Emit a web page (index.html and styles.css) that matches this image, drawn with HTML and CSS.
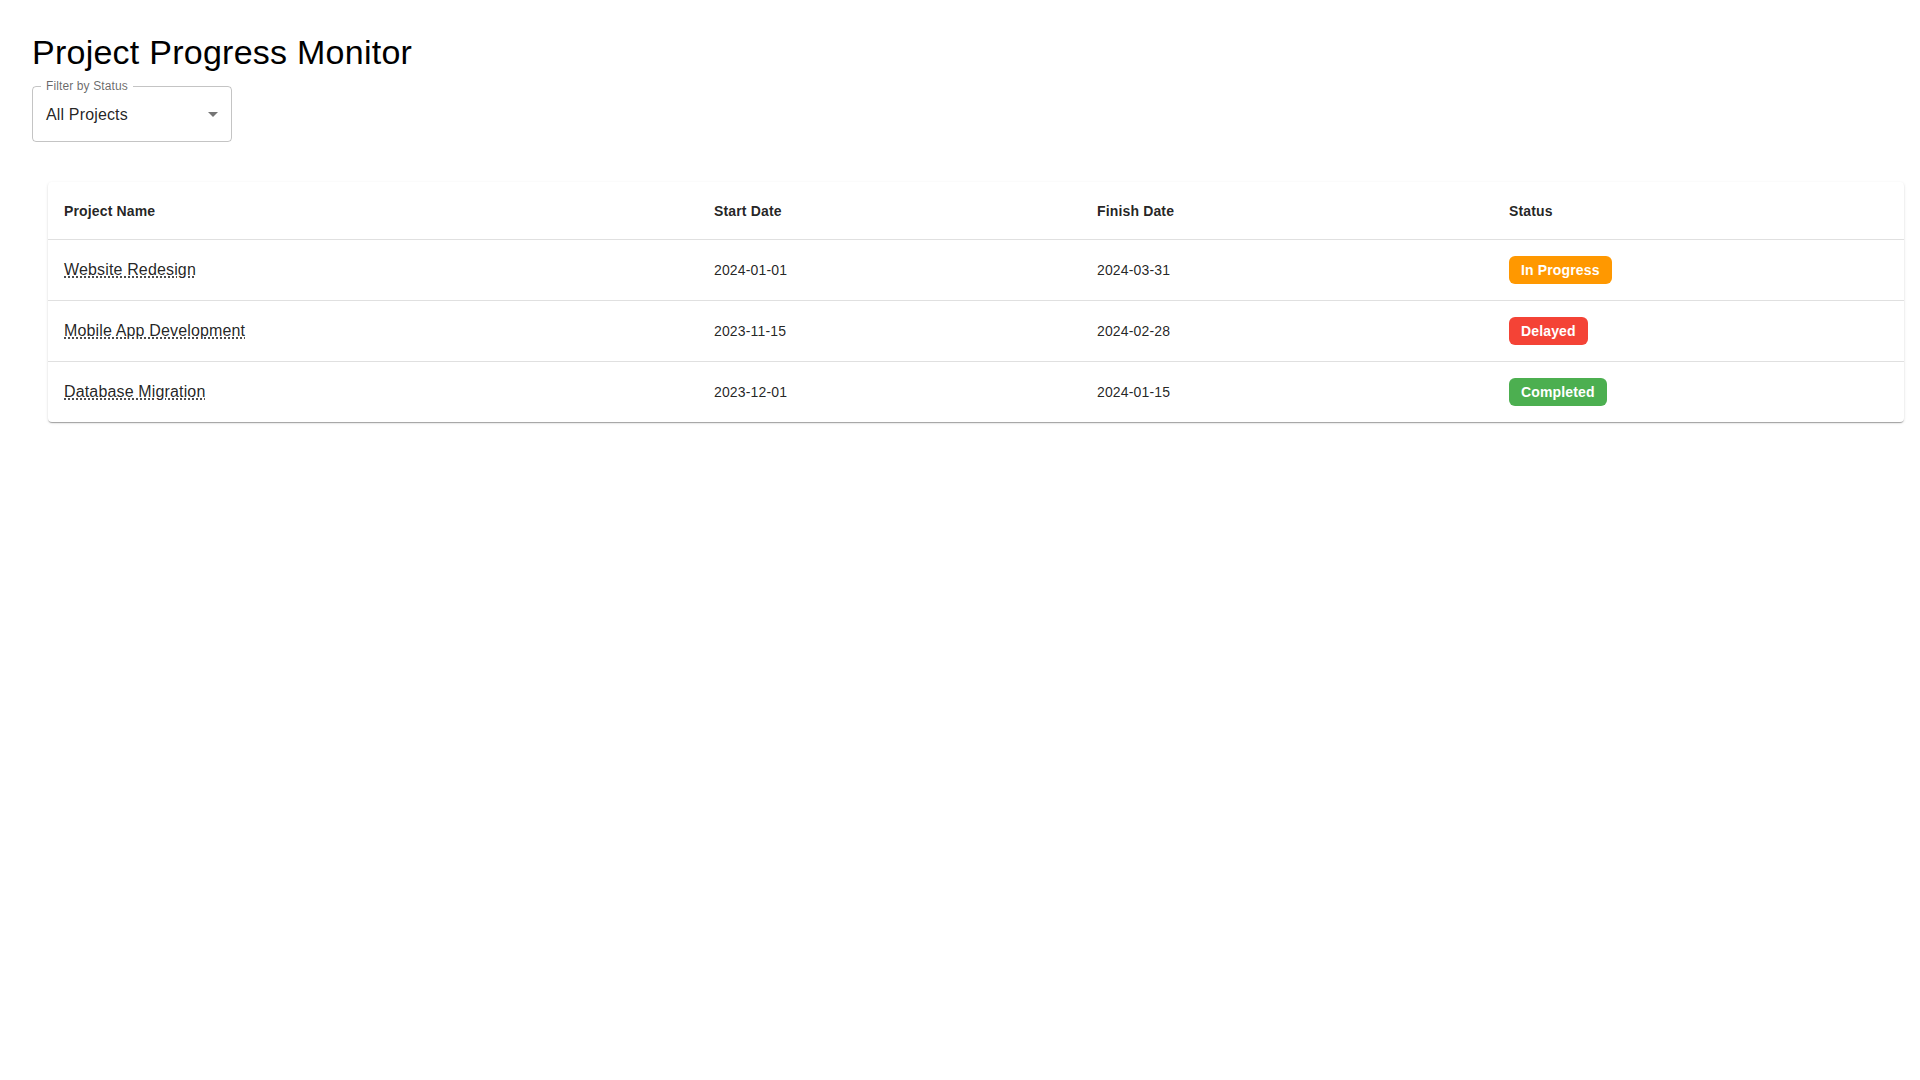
FILE: index.html
```html
<!DOCTYPE html>
<html lang="en">
<head>
<meta charset="utf-8">
<title>Project Progress Monitor</title>
<link rel="stylesheet" href="styles.css">
</head>
<body>
<main class="page">
  <h1 class="title">Project Progress Monitor</h1>
  <div class="select">
    <span class="select-label">Filter by Status</span>
    <span class="select-value">All Projects</span>
    <svg class="select-arrow" viewBox="0 0 24 24" width="24" height="24" aria-hidden="true"><path d="M7 10l5 5 5-5z"/></svg>
  </div>
  <div class="paper">
    <table class="table">
      <thead>
        <tr>
          <th class="col-name">Project Name</th>
          <th class="col-start">Start Date</th>
          <th class="col-finish">Finish Date</th>
          <th class="col-status">Status</th>
        </tr>
      </thead>
      <tbody>
        <tr>
          <td><span class="name">Website Redesign</span></td>
          <td class="date">2024-01-01</td>
          <td class="date">2024-03-31</td>
          <td><span class="chip chip-progress">In Progress</span></td>
        </tr>
        <tr>
          <td><span class="name">Mobile App Development</span></td>
          <td class="date">2023-11-15</td>
          <td class="date">2024-02-28</td>
          <td><span class="chip chip-delayed">Delayed</span></td>
        </tr>
        <tr>
          <td><span class="name">Database Migration</span></td>
          <td class="date">2023-12-01</td>
          <td class="date">2024-01-15</td>
          <td><span class="chip chip-done">Completed</span></td>
        </tr>
      </tbody>
    </table>
  </div>
</main>
</body>
</html>
```

FILE: styles.css
```css
* { box-sizing: border-box; }

html, body {
  margin: 0;
  background: #ffffff;
}

body {
  font-family: "Liberation Sans", Arial, Helvetica, sans-serif;
  color: rgba(0, 0, 0, 0.87);
}

.page {
  padding: 31px 32px 32px;
}

.title {
  margin: 0 0 13px;
  font-size: 34px;
  line-height: 42px;
  font-weight: 400;
  letter-spacing: 0.00735em;
  color: #000;
}

.select {
  position: relative;
  width: 200px;
  height: 56px;
  border: 1px solid rgba(0, 0, 0, 0.23);
  border-radius: 4px;
  display: flex;
  align-items: center;
  padding: 0 6px 0 13px;
}

.select-label {
  position: absolute;
  top: -8px;
  left: 8px;
  padding: 0 5px;
  background: #fff;
  font-size: 12px;
  line-height: 14px;
  letter-spacing: 0.00938em;
  color: rgba(0, 0, 0, 0.6);
}

.select-value {
  flex: 1;
  font-size: 16px;
  line-height: 23px;
  letter-spacing: 0.00938em;
  color: rgba(0, 0, 0, 0.87);
}

.select-arrow {
  fill: rgba(0, 0, 0, 0.54);
  flex: none;
}

.paper {
  margin: 40px 0 0 16px;
  width: 100%;
  background: #fff;
  border-radius: 4px;
  box-shadow: 0px 2px 1px -1px rgba(0, 0, 0, 0.2),
              0px 1px 1px 0px rgba(0, 0, 0, 0.14),
              0px 1px 3px 0px rgba(0, 0, 0, 0.12);
  overflow: hidden;
}

.table {
  width: 100%;
  border-collapse: collapse;
  table-layout: fixed;
}

.col-name { width: 650px; }
.col-start { width: 383px; }
.col-finish { width: 412px; }
.col-status { width: auto; }

.table th,
.table td {
  padding: 16px;
  text-align: left;
  vertical-align: middle;
  border-bottom: 1px solid #e0e0e0;
  font-size: 14px;
  line-height: 24px;
  letter-spacing: 0.01071em;
  color: rgba(0, 0, 0, 0.87);
}

.table th {
  font-weight: 700;
  padding-top: 17px;
}

.table tbody tr:last-child td {
  border-bottom: 0;
}

.name {
  font-size: 16px;
  line-height: 24px;
  letter-spacing: 0.00938em;
  text-decoration: underline dotted;
  text-underline-offset: 2px;
  cursor: help;
}

.date {
  white-space: nowrap;
}

.chip {
  display: inline-block;
  height: 28px;
  line-height: 28px;
  padding: 0 12px;
  border-radius: 6px;
  font-size: 14px;
  font-weight: 700;
  letter-spacing: 0.01em;
  color: #fff;
  vertical-align: middle;
}

.chip-progress { background: #ff9800; }
.chip-delayed { background: #f44336; }
.chip-done { background: #4caf50; }
```
